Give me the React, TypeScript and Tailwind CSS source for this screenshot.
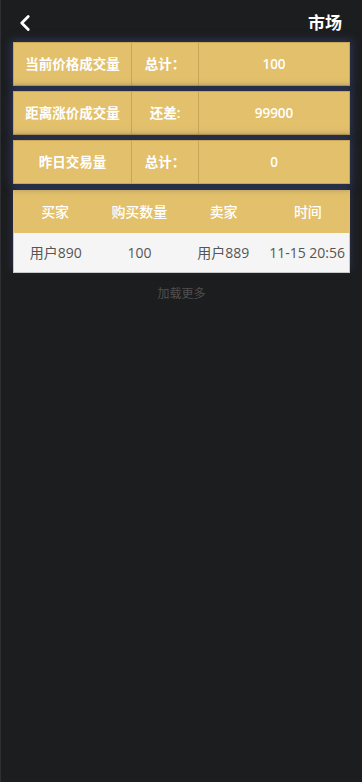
import { ChevronLeft } from 'lucide-react';

const stats = [
  { label: '当前价格成交量', key: '总计：', value: '100' },
  { label: '距离涨价成交量', key: '还差:', value: '99900' },
  { label: '昨日交易量', key: '总计：', value: '0' },
];

const rows = [{ buyer: '用户890', amount: '100', seller: '用户889', time: '11-15 20:56' }];

export default function App() {
  return (
    <div
      className="min-h-[782px] bg-[#1c1d1f] border-l border-[#2e2f33]"
      style={{ fontFamily: '"Open Sans", "Noto Sans CJK SC", sans-serif' }}
    >
      <header className="h-[42px] flex items-center justify-between pl-[11px] pr-[20px] pt-[3px]">
        <ChevronLeft className="w-[26px] h-[26px] text-white" strokeWidth={2.6} />
        <h1 className="text-[17px] font-bold text-white">市场</h1>
      </header>

      <main className="px-[12px]">
        <div className="flex flex-col gap-[5px]">
          {stats.map((s) => (
            <div
              key={s.label}
              className="h-[44px] flex bg-[#e3c06b] border border-[#c9a656] text-white text-[13.5px] font-semibold shadow-[0_0_8px_2px_#2c3656]"
            >
              <div className="w-[118px] flex items-center justify-center border-r border-[#c9a656]">{s.label}</div>
              <div className="w-[67px] flex items-center justify-center border-r border-[#c9a656]">{s.key}</div>
              <div className="flex-1 flex items-center justify-center">{s.value}</div>
            </div>
          ))}
        </div>

        <div className="mt-[6px] shadow-[0_-4px_8px_0_#2c3656]">
          <div className="h-[43px] grid grid-cols-4 bg-[#e3c06b] text-white text-[14px] font-medium">
            <div className="flex items-center justify-center">买家</div>
            <div className="flex items-center justify-center">购买数量</div>
            <div className="flex items-center justify-center">卖家</div>
            <div className="flex items-center justify-center">时间</div>
          </div>
          {rows.map((r, i) => (
            <div
              key={i}
              className="h-[40px] grid grid-cols-4 bg-[#f5f5f5] border border-t-0 border-[#c8c8c8] text-[#555] text-[14px]"
            >
              <div className="flex items-center justify-center">{r.buyer}</div>
              <div className="flex items-center justify-center">{r.amount}</div>
              <div className="flex items-center justify-center">{r.seller}</div>
              <div className="flex items-center justify-center whitespace-nowrap">{r.time}</div>
            </div>
          ))}
        </div>

        <p className="mt-[12px] text-center text-[12px] text-[#4f4f4f]">加载更多</p>
      </main>
    </div>
  );
}
